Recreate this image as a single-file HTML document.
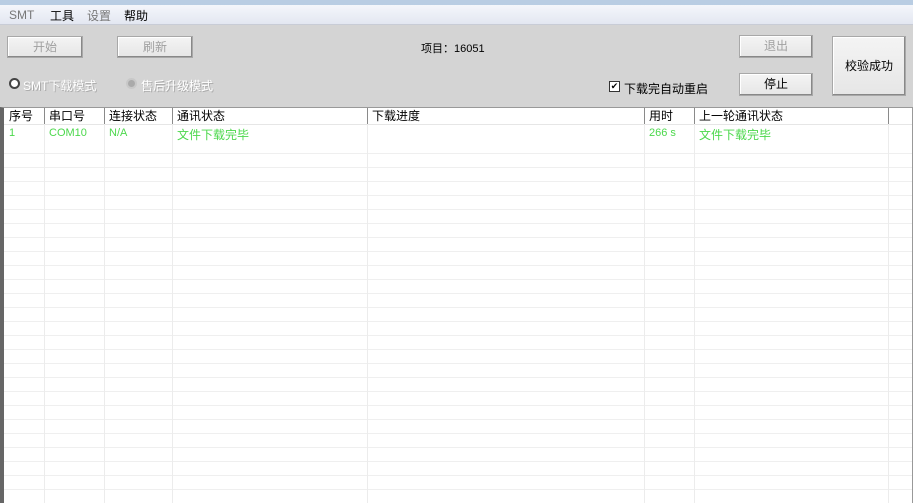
<!DOCTYPE html><html><head><meta charset="utf-8"><style>
body{margin:0;width:913px;height:503px;overflow:hidden;background:#d4d4d4;font-family:"Liberation Sans","Noto Sans CJK SC",sans-serif;font-size:12px;position:relative}
.a{position:absolute}
.btn{position:absolute;background:linear-gradient(#f4f4f4,#e6e6e6);border:1px solid #a8a8a8;box-shadow:inset -1px -1px 0 #888,inset 1px 1px 0 #fff;text-align:center;box-sizing:border-box;color:#000}
.dis{color:#a0a0a0}
.hd{position:absolute;top:108px;height:16px;line-height:17px;font-size:12px;padding-left:4px;box-sizing:border-box;border-right:1px solid #8a8a8a}
.g{position:absolute;top:127px;color:#4cd84c;font-size:11px}
.vl{position:absolute;top:124px;bottom:0;width:1px;background:#ececec}
</style></head><body>
<div class="a" style="left:0;top:0;width:913px;height:5px;background:#b9cde3"></div>
<div class="a" style="left:0;top:5px;width:913px;height:19px;background:linear-gradient(#f4f6fb,#e3e7f1);border-bottom:1px solid #c8ccd6"></div>
<div class="a" style="left:9px;top:8px;color:#777">SMT</div>
<div class="a" style="left:50px;top:7px">工具</div>
<div class="a" style="left:87px;top:7px;color:#777">设置</div>
<div class="a" style="left:124px;top:7px">帮助</div>
<div class="a" style="left:0;top:25px;width:913px;height:82px;background:#d4d4d4"></div>
<div class="btn dis" style="left:7px;top:36px;width:76px;height:22px;line-height:20px">开始</div>
<div class="btn dis" style="left:117px;top:36px;width:76px;height:22px;line-height:20px">刷新</div>
<div class="a" style="left:421px;top:40px;font-size:11px">项目：16051</div>
<div class="btn dis" style="left:739px;top:35px;width:74px;height:23px;line-height:21px">退出</div>
<div class="btn" style="left:739px;top:73px;width:74px;height:23px;line-height:21px">停止</div>
<div class="btn" style="left:832px;top:36px;width:74px;height:60px;line-height:58px">校验成功</div>
<div class="a" style="left:9px;top:78px;width:7px;height:7px;border:2px solid #444;border-radius:50%;background:#fff"></div>
<div class="a" style="left:23px;top:77px;color:#fff;text-shadow:1px 1px 0 #aaa">SMT下载模式</div>
<div class="a" style="left:126px;top:78px;width:7px;height:7px;border:2px solid #c8c8c8;border-radius:50%;background:#aaa"></div>
<div class="a" style="left:141px;top:77px;color:#fff;text-shadow:1px 1px 0 #aaa">售后升级模式</div>
<div class="a" style="left:609px;top:81px;width:9px;height:9px;border:1px solid #333;background:#fff;font-size:9px;line-height:9px;text-align:center">✔</div>
<div class="a" style="left:624px;top:80px">下载完自动重启</div>
<div class="a" style="left:0;top:107px;width:913px;height:396px;background:#fff;border-left:4px solid #666;box-sizing:border-box;border-right:1px solid #999;border-top:1px solid #999"></div>
<div class="a" style="left:4px;top:140px;width:908px;height:363px;background:repeating-linear-gradient(#fff 0,#fff 13px,#efefef 13px,#efefef 14px)"></div>
<div class="hd" style="left:5px;width:40px">序号</div>
<div class="hd" style="left:45px;width:60px">串口号</div>
<div class="hd" style="left:105px;width:68px">连接状态</div>
<div class="hd" style="left:173px;width:195px">通讯状态</div>
<div class="hd" style="left:368px;width:277px">下载进度</div>
<div class="hd" style="left:645px;width:50px">用时</div>
<div class="hd" style="left:695px;width:194px">上一轮通讯状态</div>
<div class="a" style="left:4px;top:124px;width:908px;height:1px;background:#e6e6e6"></div>
<div class="vl" style="left:44px"></div><div class="vl" style="left:104px"></div><div class="vl" style="left:172px"></div><div class="vl" style="left:367px"></div><div class="vl" style="left:644px"></div><div class="vl" style="left:694px"></div><div class="vl" style="left:888px"></div>
<div class="g" style="left:9px">1</div>
<div class="g" style="left:49px">COM10</div>
<div class="g" style="left:109px">N/A</div>
<div class="g" style="left:177px;font-size:12px;top:126px">文件下载完毕</div>
<div class="g" style="left:649px">266 s</div>
<div class="g" style="left:699px;font-size:12px;top:126px">文件下载完毕</div>
</body></html>
